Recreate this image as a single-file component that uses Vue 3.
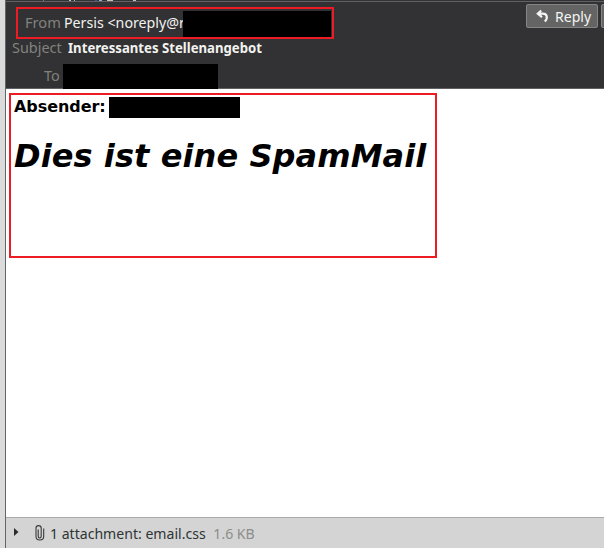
<script setup>
const bits = [
  { x: 43, w: 1, c: '#77787a' }, { x: 69, w: 2, c: '#bbb' }, { x: 74, w: 1, c: '#bbb' },
  { x: 95, w: 2, c: '#345b96' }, { x: 99, w: 3, c: '#8fb0d8' }, { x: 107, w: 6, c: '#c5c0bb' },
  { x: 133, w: 3, c: '#c5c0bb' }
]
</script>

<template>
  <div class="window">
    <div class="gutter"></div>
    <div class="mail">
      <header class="header">
        <div class="clipped"><i v-for="b in bits" :key="b.x" :style="{ left: b.x - 6 + 'px', width: b.w + 'px', background: b.c }"></i></div>
        <div class="top">
          <div class="from">
            <span class="label">From</span><span class="value sender"><span class="fit">Persis &lt;noreply@r</span></span><span class="redact r1"></span>
          </div>
          <div class="actions">
            <button class="reply">
              <svg width="14" height="15" viewBox="0 0 14 15"><path d="M5.200 1.500 1.800 4.700l4.200 3.500M2.300 4.600h4.500c4.400 0 5.400 4.400 2 8" fill="none" stroke="#f4f4f2" stroke-width="2.200" /></svg>
              <span class="fit">Reply</span>
            </button>
            <button class="next"></button>
          </div>
        </div>
        <div class="row subject"><span class="label">Subject</span><b class="value title">Interessantes Stellenangebot</b></div>
        <div class="row to"><span class="label">To</span><span class="redact r2"></span></div>
      </header>
      <main class="body">
        <section class="message">
          <div class="absender"><b>Absender:</b><span class="redact r3"></span></div>
          <h1>Dies ist eine SpamMail</h1>
        </section>
      </main>
      <footer class="footer">
        <svg class="arrow" width="5" height="8" viewBox="0 0 5 8"><path d="M0 0 4.500 4 0 8z" fill="#2b2c2d" /></svg>
        <svg class="clip" width="10" height="16" viewBox="0 0 10 16"><path d="M3.200 4.500v6.800c0 2.200 3 2.200 3 0V3.200C6.200-.3 1-.3 1 3.200v8.300c0 4.700 7.700 4.700 7.700 0V3.500" fill="none" stroke="#38393b" stroke-width="1.100" /></svg>
        <span class="info"><span>1 attachment: </span><span>email.css</span><span class="size">1.6 KB</span></span>
      </footer>
    </div>
  </div>
</template>

<style>
body { background: #fff; overflow: hidden; }
</style>
<style scoped>
* { box-sizing: border-box; }
.window { display: flex; width: 604px; height: 548px; overflow: hidden; font: 14.67px/20px "Noto Sans", sans-serif; }
.gutter { width: 5px; flex: none; background: #dbdbdb; }
.mail { flex: 1; min-width: 0; display: flex; flex-direction: column; border-left: 1px solid #646568; }
.header { height: 89px; flex: none; background: #323234; border-bottom: 1px solid #616164; display: flex; flex-direction: column; }
.clipped { position: relative; height: 2px; border-bottom: 1px solid #616164; }
.clipped i { position: absolute; top: 0; height: 1px; }
.top { display: flex; justify-content: space-between; height: 37px; }
.from { display: flex; margin: 5px 0 0 10px; width: 318px; height: 32px; border: 2px solid #ed1c24; padding: 2px 1px 2px 7px; }
.label { color: #81827e; flex: none; transform: scaleX(.985); transform-origin: 0 50%; }
.from .label { width: 39px; line-height: 23px; transform: none; }
.sender { line-height: 23px; width: 119px; flex: none; white-space: nowrap; }
.fit { display: inline-block; transform: scaleX(.97); transform-origin: 0 50%; }
.value { color: #f2f2f0; }
.redact { background: #000; display: block; flex: none; position: relative; }
.r1 { width: 148px; height: 26px; }
.actions { display: flex; gap: 3px; margin-top: 2px; width: 78px; flex: none; overflow: hidden; }
button { font: inherit; height: 24px; border: 1px solid #858587; border-radius: 2px; background: #646464; color: #f4f4f2; padding: 0; flex: none; }
.reply { width: 72px; display: flex; align-items: center; padding-left: 9px; gap: 5px; }
.reply .fit { transform: scaleX(.96); }
.next { width: 30px; }
.row { display: flex; }
.subject { height: 25px; padding-left: 6px; line-height: 16px; }
.subject .label { width: 55.500px; }
.title { white-space: nowrap; transform: scaleX(.898); transform-origin: 0 50%; }
.to { height: 24px; padding-left: 38px; line-height: 22px; }
.to .label { width: 19px; }
.r2 { width: 155px; height: 25px; }
.body { flex: 1; background: #fff; padding: 4px 0 0 3px; font-family: "DejaVu Sans", sans-serif; color: #000; }
.message { width: 428px; height: 165px; border: 2px solid #ed1c24; padding: 2px 0 0 3px; }
.absender { display: flex; font-size: 16px; line-height: 19px; }
.absender b { width: 95px; letter-spacing: -.06px; }
.r3 { width: 131px; height: 21px; }
h1 { margin: 20px 0 0; font-size: 32px; line-height: 37px; font-style: italic; white-space: nowrap; letter-spacing: .09px; }
.footer { height: 31px; flex: none; background: #d4d4d4; border-top: 1px solid #a9a9a9; display: flex; align-items: center; padding-left: 8px; color: #2e3436; white-space: pre; }
.arrow { margin: 0 16px 2px 0; }
.clip { margin-right: 4.500px; }
.info { transform: scaleX(.96); transform-origin: 0 50%; }
.size { color: #8b8e8b; margin-left: 8px; }
</style>
